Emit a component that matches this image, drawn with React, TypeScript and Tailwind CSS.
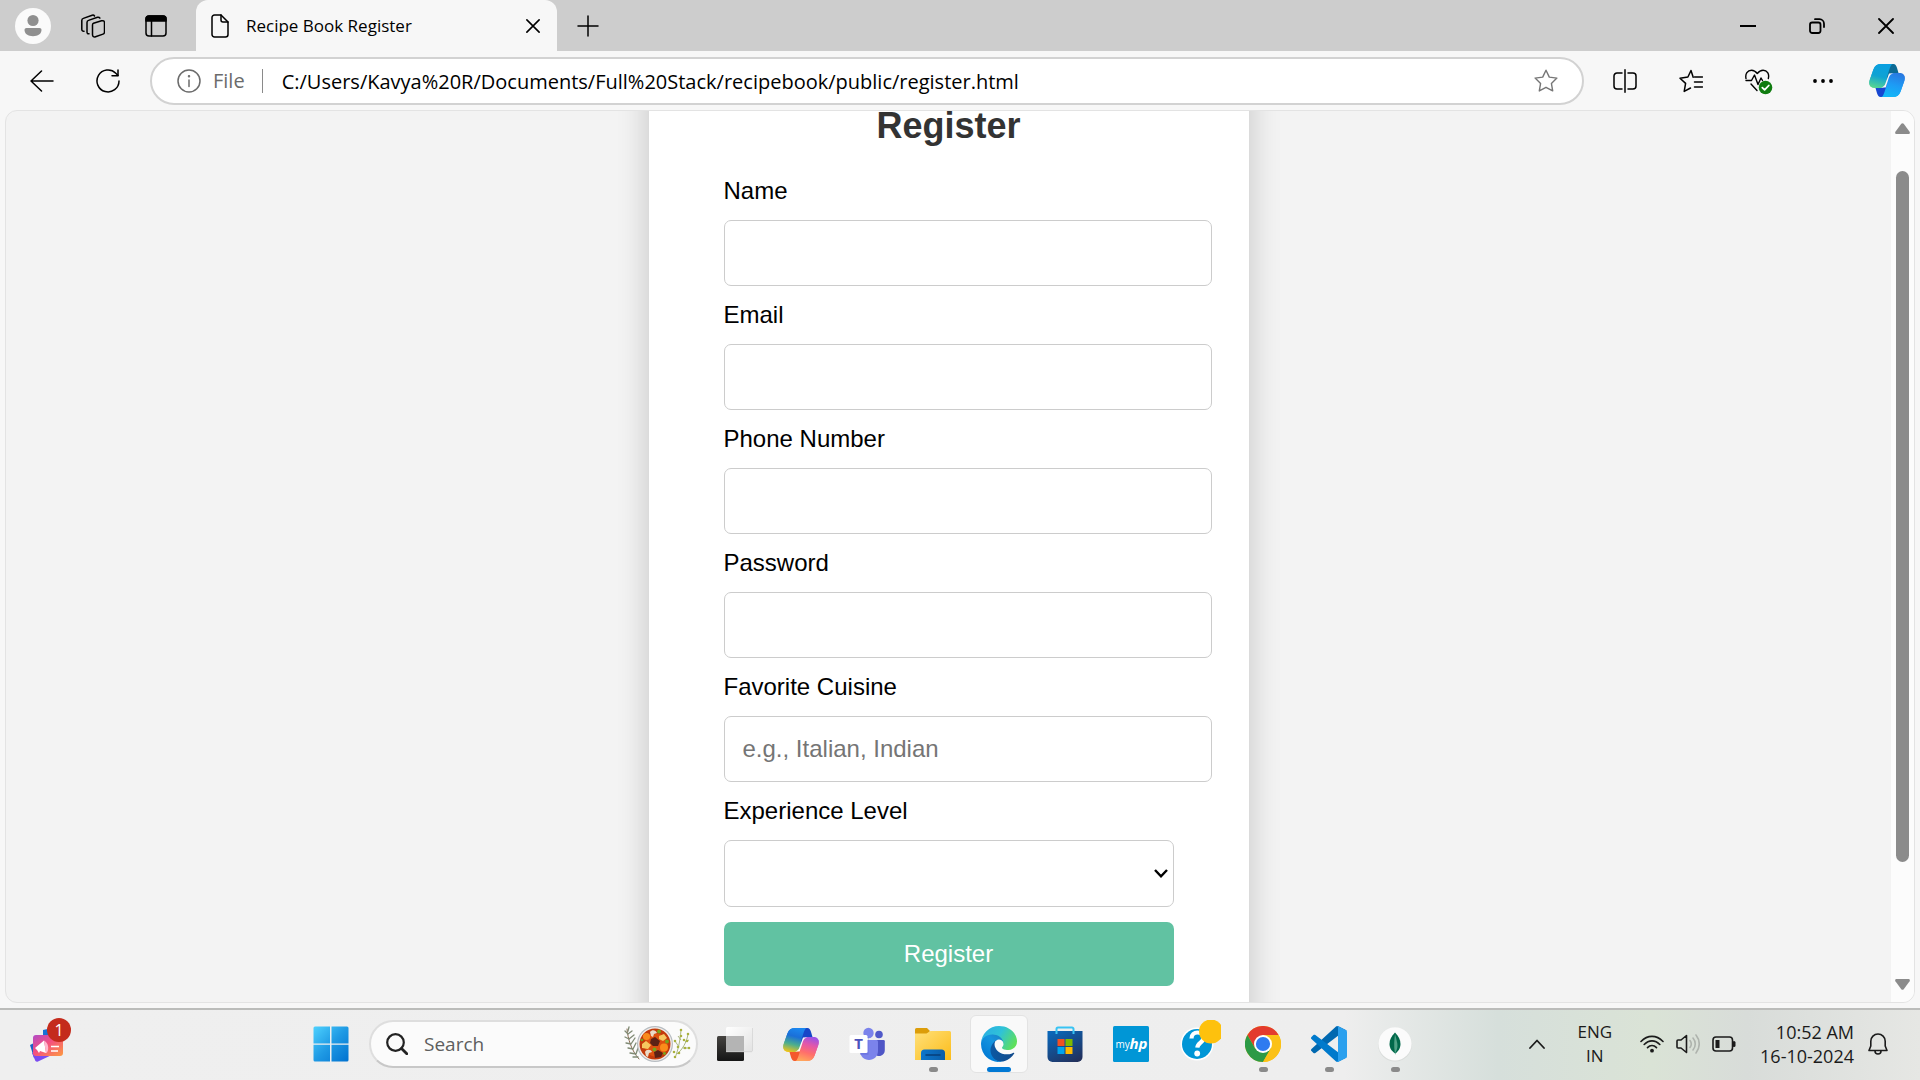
import type { ReactNode } from 'react';

const UI = "font-['Open_Sans','Noto_Sans',sans-serif]";
const ARIAL = "font-['Liberation_Sans',Arial,sans-serif]";

/* ---------- browser chrome icons ---------- */

const line = { fill: 'none', stroke: 'currentColor', strokeLinecap: 'round', strokeLinejoin: 'round' } as const;

const Avatar = () => (
  <svg className="size-9" viewBox="0 0 36 36">
    <circle cx="18" cy="18" r="18" fill="#fafafa" />
    <circle cx="18" cy="12.500" r="5.600" fill="#8f8f8f" />
    <path d="M11.500 20h13c1.200 0 2 .8 2 2 0 3.800-3.600 6.200-8.500 6.200S9.500 25.800 9.500 22c0-1.200.8-2 2-2Z" fill="#8f8f8f" />
  </svg>
);

const Workspaces = () => (
  <svg className="size-6" viewBox="0 0 24 24" {...line} strokeWidth="1.500">
    <path d="M12.500 9.200 20.500 6.800c1.700-.5 3 .3 3 2V18c0 1-.6 1.800-1.500 2.100l-7.500 2.700c-1.600.6-3-.3-3-2V11c0-.9.4-1.500 1-1.800Z" />
    <path d="M8 19.800C6.600 20 6 19.200 6 18V8.500c0-1 .5-1.800 1.500-2.100L16.500 3.300c1-.3 1.900 0 2.400.9" />
    <path d="M3 17.200C1.500 17.400.8 16.500.8 15.300V6.500c0-1 .5-1.800 1.500-2.100L11.200 1.200c1-.3 1.800 0 2.300.8" />
  </svg>
);

const VerticalTabs = () => (
  <svg className="h-[22px] w-[22px]" viewBox="0 0 22 22" {...line} strokeWidth="1.500">
    <rect x="1" y="1" width="20" height="20" rx="3" />
    <path d="M1 6V4a3 3 0 0 1 3-3h14a3 3 0 0 1 3 3v2Z" fill="currentColor" />
    <path d="M6.500 6v15" />
  </svg>
);

const PageIcon = () => (
  <svg className="h-6 w-[18px]" viewBox="0 0 18 24" {...line} strokeWidth="1.500">
    <path d="M3.500 1H10l7 7v12.500a2.500 2.500 0 0 1-2.500 2.500h-11A2.500 2.500 0 0 1 1 20.500v-17A2.500 2.500 0 0 1 3.500 1Z" />
    <path d="M10 1v5a2 2 0 0 0 2 2h5" />
  </svg>
);

const Cross = ({ className }: { className: string }) => (
  <svg className={className} viewBox="0 0 16 16" {...line} strokeWidth="1.800">
    <path d="m1 1 14 14M15 1 1 15" />
  </svg>
);

const Plus = () => (
  <svg className="size-[22px]" viewBox="0 0 22 22" {...line} strokeWidth="1.500">
    <path d="M11 1v20M1 11h20" />
  </svg>
);

const Restore = () => (
  <svg className="size-4" viewBox="0 0 16 16" {...line} strokeWidth="1.800">
    <rect x="1" y="4.500" width="10.500" height="10.500" rx="2.200" />
    <path d="M6 1.200h4.500A4.500 4.500 0 0 1 15 5.700V9" />
  </svg>
);

const Back = () => (
  <svg className="size-6" viewBox="0 0 24 24" {...line} strokeWidth="1.500">
    <path d="M23 12H1M11.500 2 1 12l10.500 10" />
  </svg>
);

const Reload = () => (
  <svg className="size-6" viewBox="0 0 24 24" {...line} strokeWidth="1.500">
    <path d="M23 12A11 11 0 1 1 19.800 4.200L22 6.500" />
    <path d="M22 1v5.800h-6" />
  </svg>
);

const Info = () => (
  <svg className="size-6 text-[#6b6b6b]" viewBox="0 0 24 24" {...line} strokeWidth="1.500">
    <circle cx="12" cy="12" r="11" />
    <path d="M12 11v6.500" />
    <circle cx="12" cy="7.300" r=".5" fill="currentColor" />
  </svg>
);

const StarIcon = () => (
  <svg className="size-6 text-[#767676]" viewBox="0 0 24 24" {...line} strokeWidth="1.400">
    <path d="m12 1.200 3.300 6.900 7.600 1-5.500 5.300 1.300 7.500L12 18.300l-6.700 3.600 1.300-7.500L1.100 9.100l7.600-1Z" />
  </svg>
);

const SplitScreen = () => (
  <svg className="size-6" viewBox="0 0 24 24" {...line} strokeWidth="1.500">
    <path d="M12 .8v22.400M9 4H4a3 3 0 0 0-3 3v10a3 3 0 0 0 3 3h5M15 4h5a3 3 0 0 1 3 3v10a3 3 0 0 1-3 3h-5" />
  </svg>
);

const Favorites = () => (
  <svg className="size-6" viewBox="0 0 24 24" {...line} strokeWidth="1.500">
    <path d="M14.200 8.200 12 1.500 8.900 8 1 9.200l5.600 5.200-1.400 8L11.500 19" />
    <path d="M15.500 8h8M15.500 13h8M15.500 18h8" />
  </svg>
);

const Essentials = () => (
  <svg className="h-7 w-7" viewBox="0 0 28 28" {...line} strokeWidth="1.400">
    <path d="M1 11.500C0 7 2.500 3.200 6.500 3.200c2.500 0 4.200 1.200 5.800 3.300 1.600-2.100 3.300-3.300 5.800-3.300 4 0 6.500 3.800 5.200 8.300" />
    <path d="M1 13.500h5.500L9.500 8l3.500 9.500 3-6.500 1.500 2.500M6 17l6 6.500" />
    <circle cx="20.500" cy="20.500" r="6.800" fill="#107c10" stroke="none" />
    <path d="m17.300 20.700 2.300 2.200 4.200-4.400" stroke="#fff" strokeWidth="1.800" />
  </svg>
);

const Dots = () => (
  <svg className="size-6" viewBox="0 0 24 24" fill="currentColor">
    <circle cx="4" cy="12" r="1.900" /><circle cx="12" cy="12" r="1.900" /><circle cx="20" cy="12" r="1.900" />
  </svg>
);

const LOBE_L = 'M12 0H27C24 0 22.500 2 21.500 5L17 19.500C16 22.700 14.500 24 11.500 24H6C1 24-.6 20.500.7 16L4.400 5.500C5.800 1.700 8.300 0 12 0Z';
const LOBE_R = 'M24 33H9C12 33 13.500 31 14.500 28L19 13.500C20 10.300 21.500 9 24.500 9H30C35 9 36.600 12.500 35.300 17L31.600 27.500C30.200 31.300 27.700 33 24 33Z';
const FOLD_T = 'M19 0h5c2.500 0 3.500 1.800 4.200 4.500L29.500 9h-5c-3 0-4.500 1.300-5.500 4.500L18 16.500 17.500 9Z';
const FOLD_B = 'M17 33h-5c-2.500 0-3.500-1.800-4.200-4.500L6.500 24h5c3 0 4.500-1.300 5.500-4.500l1-3 .5 7.500Z';

const Copilot = ({ id, left, right, top, bottom }: { id: string; left: string[]; right: string[]; top: string; bottom: string }) => (
  <svg className="h-[33px] w-9" viewBox="0 0 36 33">
    <defs>
      <linearGradient id={`${id}l`} x1=".5" y1="0" x2=".25" y2="1">
        {left.map((c, i) => <stop key={c} offset={i / (left.length - 1)} stopColor={c} />)}
      </linearGradient>
      <linearGradient id={`${id}r`} x1=".7" y1="0" x2=".4" y2="1">
        {right.map((c, i) => <stop key={c} offset={i / (right.length - 1)} stopColor={c} />)}
      </linearGradient>
    </defs>
    <path d={LOBE_L} fill={`url(#${id}l)`} />
    <path d={LOBE_R} fill={`url(#${id}r)`} />
    <path d={FOLD_B} fill={bottom} />
    <path d={FOLD_T} fill={top} />
    <path d="M12 0H24C22.500 0 21.500 2 20.500 5L16 19.500C15 22.700 13.500 24 10.500 24H6C1 24-.6 20.500.7 16L4.400 5.500C5.800 1.700 8.300 0 12 0Z" fill={`url(#${id}l)`} />
    <path d="M24 33H12C13.500 33 14.500 31 15.500 28L20 13.500C21 10.300 22.500 9 25.500 9H30C35 9 36.600 12.500 35.300 17L31.600 27.500C30.200 31.300 27.700 33 24 33Z" fill={`url(#${id}r)`} />
    <path d="M20 9.500h4.500c-2.600.3-3.900 1.800-4.800 4.500l-3 9.500H12c2.500-.5 3.700-1.700 4.500-4.200Z" fill="#f8f8f8" />
  </svg>
);

/* ---------- taskbar icons ---------- */

const Widgets = () => (
  <svg className="h-10 w-10" viewBox="0 0 40 40">
    <defs>
      <linearGradient id="wg" x1="0" y1="0" x2="1" y2="1">
        <stop offset="0" stopColor="#b04ac9" /><stop offset=".45" stopColor="#f4507f" /><stop offset="1" stopColor="#fd9a40" />
      </linearGradient>
    </defs>
    <path d="m14 6 9-2v10H14Z" fill="#1571d8" />
    <path d="m1 21 4-2 3 14-3 1Z" fill="#1c62c4" />
    <path d="M3 29h24L9 37.500c-1.500.6-2.600 0-3-1.500Z" fill="#7a4cf0" />
    <rect x="4" y="11" width="30" height="21" rx="3" fill="url(#wg)" />
    <path d="m6 24 9-7.500L17 29l-6-2-1 2-2-3Z" fill="#fff" />
    <path d="M15 16.500c4 2 5.500 8 3 12l-1 .5Z" fill="#ffb8cf" />
    <path d="M22 22.500h8M22 27h7" stroke="#fff" strokeWidth="1.600" />
  </svg>
);

const Start = () => (
  <svg className="size-9" viewBox="0 0 36 36">
    <defs>
      <linearGradient id="win" gradientUnits="userSpaceOnUse" x1="0" y1="0" x2="36" y2="36">
        <stop offset="0" stopColor="#4fd3ff" /><stop offset=".5" stopColor="#1f9ae4" /><stop offset="1" stopColor="#0070cf" />
      </linearGradient>
    </defs>
    <path fill="url(#win)" d="M2 .5h15v17H.500V2A1.500 1.500 0 0 1 2 .5ZM18.500.5H34A1.500 1.500 0 0 1 35.500 2v15.500h-17ZM.5 18.800h16.500v16.700H2A1.500 1.500 0 0 1 .5 34ZM18.500 18.800h17V34a1.500 1.500 0 0 1-1.500 1.500H18.500Z" />
  </svg>
);

const SearchGlyph = () => (
  <svg className="size-[22px] text-[#222]" viewBox="0 0 22 22" {...line} strokeWidth="2.200">
    <circle cx="9.500" cy="9.500" r="8.300" />
    <path d="m15.500 15.500 5.300 5.300" strokeWidth="2.800" />
  </svg>
);

const Stew = () => (
  <svg className="h-10 w-[68px]" viewBox="0 0 68 40">
    <g stroke="#7f8a74" strokeWidth="1.300" fill="none" strokeLinecap="round">
      <path d="M3 5c1 10 4 21 12 30" stroke="#8a6b52" strokeWidth="1" />
      <path d="m4 10-3-3M4 10l4-3M5 15l-4-2M5 15l5-4M7 20l-5-1M7 20l4-6M9 25l-5-1M9 25l3-6M12 30l-6-1M12 30l2-6M4 7l1-4M14 33l-5 0" strokeWidth="1.300" />
    </g>
    <g stroke="#96a566" strokeWidth="1" fill="none">
      <path d="M51 34c3-8 5-16 6-28M53 30c5-4 10-12 11-20M55 23l-4-6M57 16l-3-4M59 24l5 0M61 18l4-2" strokeWidth=".8" />
      <path d="M57 6v0M51 17v0M57 12v0M64 10v0M60 16v0M54 23v0M65 24v0M61 24v0M50 28v0M55 29v0M51 33v0M63 17v0" stroke="#a9b13e" strokeWidth="2.600" strokeLinecap="round" />
    </g>
    <circle cx="31" cy="20" r="18" fill="#b7bcc1" />
    <circle cx="31" cy="20" r="16.800" fill="#f2efec" />
    <circle cx="31" cy="20" r="15.500" fill="#c33b0c" />
    <circle cx="32" cy="21" r="11.500" fill="#dd500f" />
    <circle cx="22.500" cy="12.500" r="3.600" fill="#f98b1c" />
    <circle cx="40" cy="23.500" r="4" fill="#fb8c1a" />
    <path d="m18 20 4-3 5 4-3 4-6-1ZM35 12l5-2 3 4-4 3-4-2Z" fill="#f6c860" />
    <path d="m27 15 4-2 5 4-2 5-5 0-3-3ZM30 28l4-2 5 3-2 4-6 1Z" fill="#5c2116" />
    <path d="M26 8c2-3 6-2 7 1l-3 1-1 3-2-1ZM21 28c1-3 6-3 7 0l-3 1-1 4-2-1Z" fill="#eadbc8" />
    <circle cx="35" cy="7.500" r="1.900" fill="#76a51d" /><circle cx="43" cy="17.500" r="1.900" fill="#76a51d" />
    <circle cx="30.500" cy="25.500" r="1.900" fill="#76a51d" /><circle cx="18" cy="16" r="1.300" fill="#76a51d" />
    <circle cx="40.500" cy="29.500" r="1.400" fill="#76a51d" />
  </svg>
);

const TaskView = () => (
  <svg className="size-9" viewBox="0 0 36 36">
    <defs>
      <linearGradient id="tv" x1="0" y1="0" x2="0" y2="1"><stop offset="0" stopColor="#454340" /><stop offset="1" stopColor="#151515" /></linearGradient>
      <linearGradient id="tw" x1="0" y1="0" x2="1" y2="1"><stop offset="0" stopColor="#fff" /><stop offset="1" stopColor="#e2e2e2" /></linearGradient>
    </defs>
    <rect x="0" y="10" width="27" height="25" rx="1.500" fill="url(#tv)" />
    <rect x="9" y="1" width="27" height="25" rx="1.500" fill="url(#tw)" />
    <path d="M9 10h18v16H10.500A1.500 1.500 0 0 1 9 24.500Z" fill="#b4b4b4" />
    <path d="M9 25.700h26M35.700 2v23" stroke="#cfcfcf" strokeWidth=".8" />
  </svg>
);

const Teams = () => (
  <svg className="size-9" viewBox="0 0 36 36">
    <circle cx="30" cy="8.500" r="3.800" fill="#5059c9" />
    <path d="M26 14h8.500a1.300 1.300 0 0 1 1.300 1.300V24c0 3.500-2.500 6-5.800 6-1.600 0-3-.6-4-1.500Z" fill="#4f56c6" />
    <circle cx="19.500" cy="7" r="5.200" fill="#7b83eb" />
    <path d="M11 14h16.500a1.500 1.500 0 0 1 1.500 1.500V25c0 5-4 9-9 9s-9-4-9-9Z" fill="#7b83eb" />
    <rect x=".5" y="9" width="18" height="18" rx="1.500" fill="#fff" />
    <path d="M19 10.500v16.500h-8v1.800h8.500V12Z" fill="#5a62cf" opacity=".4" />
    <text x="9.500" y="23.300" textAnchor="middle" fontSize="15" fontWeight="700" fill="#4b53bc" fontFamily="Open Sans, sans-serif">T</text>
  </svg>
);

const Explorer = () => (
  <svg className="size-9" viewBox="0 0 36 36">
    <defs>
      <linearGradient id="fo" x1="0" y1="0" x2="1" y2="1"><stop offset="0" stopColor="#ffe07a" /><stop offset="1" stopColor="#fcbc19" /></linearGradient>
      <linearGradient id="fb" x1="0" y1="0" x2="1" y2="0"><stop offset="0" stopColor="#0d76cc" /><stop offset="1" stopColor="#0a5da8" /></linearGradient>
    </defs>
    <path d="M0 3.500A1.500 1.500 0 0 1 1.500 2H12l3 3-3 4H0Z" fill="#dc9d0a" />
    <path d="M0 7.500h11.500l4-2.500H34.500A1.500 1.500 0 0 1 36 6.500V34H0Z" fill="url(#fo)" />
    <path d="M6 34v-7a3.500 3.500 0 0 1 3.500-3.500h17A3.500 3.500 0 0 1 30 27v7Z" fill="url(#fb)" />
    <path d="M11 29h14" stroke="#073e78" strokeWidth="1.500" strokeLinecap="round" />
  </svg>
);

const Edge = () => (
  <svg className="size-9" viewBox="0 0 256 256">
    <defs>
      <linearGradient id="ea" x1="0" y1=".5" x2="1" y2=".5"><stop offset="0" stopColor="#0c59a4" /><stop offset="1" stopColor="#114a8b" /></linearGradient>
      <linearGradient id="eb" x1=".9" y1=".2" x2=".3" y2="1"><stop offset="0" stopColor="#1b86c9" /><stop offset=".3" stopColor="#1595df" /><stop offset="1" stopColor="#0078d4" /></linearGradient>
      <linearGradient id="ec" x1="0" y1=".2" x2="1" y2=".6"><stop offset="0" stopColor="#2aaee4" /><stop offset=".5" stopColor="#2fc2d8" /><stop offset="1" stopColor="#5fe05a" /></linearGradient>
    </defs>
    <path fill="url(#ea)" d="M231.070 190.540c-3.430 1.800-6.960 3.380-10.570 4.730a101.880 101.880 0 0 1-35.900 6.460c-47.320 0-88.540-32.550-88.540-74.320a31.480 31.480 0 0 1 16.400-27.280c-42.800 1.800-53.800 46.400-53.800 72.530 0 73.880 68.090 81.370 82.760 81.370 7.910 0 19.840-2.300 27-4.560l1.310-.44a128.340 128.340 0 0 0 66.600-52.800 4 4 0 0 0-5.260-5.690Z" />
    <path fill="url(#eb)" d="M105.730 241.420A79.200 79.200 0 0 1 83 220.080a80.720 80.720 0 0 1 29.500-120c3.120-1.470 8.450-4.130 15.540-4a32.350 32.350 0 0 1 25.690 13 31.880 31.880 0 0 1 6.360 18.660c0-.21 24.460-79.600-80-79.600-43.900 0-80 41.660-80 78.210a130.150 130.150 0 0 0 12.110 56 128 128 0 0 0 156.380 67.110 75.550 75.550 0 0 1-62.780-8Z" />
    <path fill="url(#ec)" d="M152.330 148.860c-.81 1.050-3.300 2.500-3.300 5.660 0 2.610 1.700 5.120 4.720 7.230 14.380 10 41.490 8.680 41.560 8.680a59.560 59.560 0 0 0 30.270-8.350 61.380 61.380 0 0 0 30.430-52.880c.26-22.410-8-37.310-11.340-43.910C223.450 23.840 177.720 0 128 0A128 128 0 0 0 0 126.200c.48-36.540 36.800-66.050 80-66.050 3.500 0 23.460.34 42 10.070 16.340 8.580 24.900 18.940 30.850 29.210 6.180 10.670 7.280 24.150 7.280 29.520s-2.740 13.330-7.800 19.910Z" />
  </svg>
);

const Store = () => (
  <svg className="size-9" viewBox="0 0 36 36">
    <defs>
      <linearGradient id="st" x1=".2" y1="0" x2=".8" y2="1"><stop offset="0" stopColor="#0a66b8" /><stop offset="1" stopColor="#22305c" /></linearGradient>
    </defs>
    <path d="M.5 5h35v26a5 5 0 0 1-5 5h-25a5 5 0 0 1-5-5Z" fill="url(#st)" />
    <path d="M9.500 8V3A1.500 1.500 0 0 1 11 1.500h14A1.500 1.500 0 0 1 26.500 3v5" fill="none" stroke="#38c3f3" strokeWidth="2" />
    <path d="M10.500 13h7v7h-7Z" fill="#f25022" /><path d="M18.500 13h7v7h-7Z" fill="#7fba00" />
    <path d="M10.500 21h7v7h-7Z" fill="#00a4ef" /><path d="M18.500 21h7v7h-7Z" fill="#ffb900" />
  </svg>
);

const MyHp = () => (
  <svg className="size-9" viewBox="0 0 36 36">
    <rect width="36" height="36" rx="1.500" fill="#0096d6" />
    <text x="2.500" y="22" fontSize="10" fill="#fff" fontFamily="Open Sans, sans-serif">my</text>
    <text x="16.500" y="22.500" fontSize="15" fontWeight="700" fontStyle="italic" fill="#fff" fontFamily="Open Sans, sans-serif">hp</text>
  </svg>
);

const Help = () => (
  <svg className="h-11 w-11" viewBox="0 0 44 44">
    <circle cx="20" cy="24" r="16.500" fill="#fff" />
    <circle cx="20" cy="24" r="15" fill="#0096d6" />
    <path d="M14.500 18.500c0-4 2.800-6 6-6s6 2 6 5.200c0 4.800-6 4.800-6.200 10" fill="none" stroke="#fff" strokeWidth="4.200" />
    <circle cx="20.200" cy="33.500" r="2.900" fill="#fff" />
    <circle cx="34" cy="11.500" r="12" fill="#fec10d" />
  </svg>
);

const Chrome = () => (
  <svg className="size-9" viewBox="0 0 36 36">
    <circle cx="18" cy="18" r="18" fill="#fbc116" />
    <path d="M18 9h15.600A18 18 0 0 0 2.400 9l7.800 13.500Z" fill="#e33b2e" />
    <path d="M10.200 22.500 2.400 9A18 18 0 0 0 18 36l7.800-13.500Z" fill="#2c9a46" />
    <path d="M25.800 22.500 18 36A18 18 0 0 0 33.600 9H18Z" fill="#fbc116" />
    <circle cx="18" cy="18" r="9" fill="#fff" />
    <circle cx="18" cy="18" r="7.100" fill="#2f7bf0" />
  </svg>
);

const VsCode = () => (
  <svg className="size-9" viewBox="0 0 100 100">
    <path fill="#0068b0" d="M96.461 10.796 75.857.876C73.472-.273 70.622.212 68.750 2.083L1.299 63.583c-1.815 1.654-1.813 4.511.004 6.162l5.510 5.009c1.485 1.350 3.722 1.450 5.321.237L93.361 13.370C96.086 11.303 100 13.246 100 16.667v-.240c0-2.400-1.375-4.589-3.539-5.631Z" />
    <path fill="#007acc" d="m96.461 89.204-20.604 9.920c-2.385 1.149-5.235.665-7.107-1.207L1.299 36.417c-1.815-1.654-1.813-4.511.004-6.162l5.510-5.009c1.485-1.350 3.722-1.450 5.321-.237L93.361 86.630C96.086 88.697 100 86.754 100 83.333v.240c0 2.400-1.375 4.589-3.539 5.631Z" />
    <path fill="#2ba0ee" d="M75.858 99.126c-2.386 1.148-5.236.662-7.108-1.209C71.056 100.223 75 98.590 75 95.328V4.672C75 1.410 71.056-.223 68.750 2.083 70.622.211 73.472-.274 75.858.874l20.601 9.907C98.623 11.822 100 14.011 100 16.413v67.174c0 2.402-1.377 4.592-3.541 5.633Z" />
  </svg>
);

const Mongo = () => (
  <svg className="size-9" viewBox="0 0 36 36">
    <circle cx="18" cy="18.500" r="17" fill="#d9dcda" />
    <circle cx="18" cy="17.800" r="16.600" fill="#fbfbfb" />
    <path d="M18 6.500c3.500 4 5.500 7 5.500 11.500S21 25.500 18.400 27.500c-3.400-2-5.900-5-5.900-9.500S14.500 10.500 18 6.500Z" fill="#00684a" />
    <path d="M18 8c-.8 6-1.200 12-.2 18.500l.3 2.500.4-2.500c1.800-3 2.300-6 1.800-9S18.800 11 18 8Z" fill="#4fa286" />
  </svg>
);

const Chevron = () => (
  <svg className="h-[10px] w-4" viewBox="0 0 16 10" {...line} strokeWidth="1.800"><path d="m1 9 7-7.500L15 9" /></svg>
);

const Wifi = () => (
  <svg className="h-[18px] w-6" viewBox="0 0 24 18" {...line} strokeWidth="1.600">
    <path d="M1 6.500c6.500-6.800 15.500-6.800 22 0M4.200 9.500c4.600-4.900 11-4.900 15.600 0M7.500 12.600c2.700-2.900 6.300-2.900 9 0" />
    <circle cx="12" cy="15.700" r="1.900" fill="currentColor" stroke="none" />
  </svg>
);

const Volume = () => (
  <svg className="h-5 w-6" viewBox="0 0 24 20" {...line} strokeWidth="1.600">
    <path d="M1 7v6a1 1 0 0 0 1 1h3l5.500 4.500V1.500L5 6H2a1 1 0 0 0-1 1Z" />
    <path d="M14 6.500c1.500 2 1.500 5 0 7M17 4c3 3.500 3 8.500 0 12M20 1c4.300 5.500 4.300 12.500 0 18" stroke="#aeb3ad" />
  </svg>
);

const Battery = () => (
  <svg className="h-4 w-6" viewBox="0 0 24 16" {...line} strokeWidth="1.600">
    <rect x="1" y="1" width="19.500" height="14" rx="3" />
    <rect x="3.500" y="4" width="4" height="8" fill="currentColor" stroke="none" />
    <path d="M22 6.500v3" strokeWidth="3" />
  </svg>
);

const Bell = () => (
  <svg className="h-[22px] w-5" viewBox="0 0 20 22" {...line} strokeWidth="1.600">
    <path d="M10 1a7.200 7.200 0 0 0-7.200 7.200v4.800L1 17.500h18L17.200 13V8.200A7.200 7.200 0 0 0 10 1ZM7 18a3 3 0 0 0 6 0" />
  </svg>
);

/* ---------- building blocks ---------- */

function IconButton({ label, className, children }: { label: string; className?: string; children: ReactNode }) {
  return (
    <button type="button" aria-label={label} className={`flex shrink-0 items-center justify-center ${className ?? ''}`}>
      {children}
    </button>
  );
}

function TaskButton({ label, state, children }: { label: string; state?: 'running' | 'active'; children: ReactNode }) {
  return (
    <button type="button" aria-label={label} className="flex h-full w-[66px] shrink-0 items-center justify-center">
      <span
        className={`relative flex size-[58px] items-center justify-center rounded-md border ${
          state === 'active' ? 'border-[#e3e3e3] bg-[#f9f9f9]' : 'border-transparent'
        }`}
      >
        {children}
        {state === 'active' && <span className="absolute bottom-0 h-[5px] w-6 rounded-full bg-[#0078d4]" />}
        {state === 'running' && <span className="absolute bottom-0 h-[5px] w-[9px] rounded-full bg-[#8a8a8a]" />}
      </span>
    </button>
  );
}

const fields = [
  { id: 'name', label: 'Name', type: 'text' },
  { id: 'email', label: 'Email', type: 'email' },
  { id: 'phone', label: 'Phone Number', type: 'tel' },
  { id: 'password', label: 'Password', type: 'password' },
  { id: 'cuisine', label: 'Favorite Cuisine', type: 'text', placeholder: 'e.g., Italian, Indian' },
];

function TabStrip() {
  return (
    <header className="flex h-[51px] shrink-0 items-center bg-[#cdcdcd]">
      <IconButton label="Profile" className="ml-[15px]"><Avatar /></IconButton>
      <IconButton label="Workspaces" className="ml-[30px]"><Workspaces /></IconButton>
      <IconButton label="Tab actions" className="ml-10"><VerticalTabs /></IconButton>
      <div className="ml-[29px] flex h-full w-[361px] items-center rounded-t-xl bg-[#f7f7f7] pr-[17px] pl-[15px]">
        <PageIcon />
        <span className="ml-[17px] grow text-[17px] whitespace-nowrap">Recipe Book Register</span>
        <IconButton label="Close tab"><Cross className="size-[14px]" /></IconButton>
      </div>
      <IconButton label="New tab" className="ml-5"><Plus /></IconButton>
      <div className="ml-auto flex items-center gap-[53px] pr-[26px]">
        <IconButton label="Minimize" className="h-4 w-4"><span className="h-0.5 w-4 bg-black" /></IconButton>
        <IconButton label="Restore"><Restore /></IconButton>
        <IconButton label="Close"><Cross className="size-4" /></IconButton>
      </div>
    </header>
  );
}

function Toolbar() {
  return (
    <div className="flex h-[59px] shrink-0 items-center bg-[#f7f7f7] pl-[30px]">
      <IconButton label="Back"><Back /></IconButton>
      <IconButton label="Refresh" className="ml-[42px]"><Reload /></IconButton>
      <div className="ml-[30px] flex h-12 grow items-center rounded-full border-2 border-[#d2d2d2] bg-white pr-6 pl-[25px]">
        <Info />
        <span className="ml-3 pt-px text-[20px] text-[#6b6b6b]">File</span>
        <span className="ml-[17px] h-6 w-px bg-[#8a8a8a]" />
        <input
          aria-label="Address"
          readOnly
          value="C:/Users/Kavya%20R/Documents/Full%20Stack/recipebook/public/register.html"
          className="ml-[19px] h-8 grow bg-transparent pt-px text-[20px] text-black outline-none"
        />
        <IconButton label="Add to favorites"><StarIcon /></IconButton>
      </div>
      <div className="ml-[29px] flex items-center gap-[42px] pr-[15px]">
        <IconButton label="Split screen"><SplitScreen /></IconButton>
        <IconButton label="Favorites"><Favorites /></IconButton>
        <IconButton label="Browser essentials" className="-mr-1"><Essentials /></IconButton>
        <IconButton label="Settings and more"><Dots /></IconButton>
        <IconButton label="Copilot" className="-ml-2">
          <Copilot id="ct" left={['#0a9fe0', '#0fa3d3', '#58d68f']} right={['#2a78e0', '#1d9bf5', '#13b7f7']} top="#0c6a94" bottom="#1747d1" />
        </IconButton>
      </div>
    </div>
  );
}

function RegisterPage() {
  const control = 'rounded-[7px] border border-[#ccc] bg-white px-[18px]';
  return (
    <div className={`min-w-0 grow text-[24px] leading-7 text-black ${ARIAL}`}>
      <main className="mx-auto -mt-[51px] min-h-full w-[600px] max-w-full bg-white px-[75px] pt-[45px] pb-[75px] shadow-[0_0_30px_rgba(0,0,0,0.2)]">
        <h2 className="mb-[30px] text-center text-[36px] leading-[42px] font-bold text-[#333]">Register</h2>
        <form className="flex flex-col gap-[15px]" onSubmit={(e) => e.preventDefault()}>
          {fields.map((f) => (
            <div key={f.id} className="-mr-[38px] flex flex-col gap-[15px]">
              <label htmlFor={f.id} className="self-start">{f.label}</label>
              <input id={f.id} type={f.type} placeholder={f.placeholder} className={`h-[66px] placeholder:text-[#757575] ${control}`} />
            </div>
          ))}
          <label htmlFor="level" className="self-start">Experience Level</label>
          <div className="relative flex">
            <select id="level" defaultValue="" className={`h-[67px] grow appearance-none ${control}`}>
              <option value=""></option>
              <option>Beginner</option>
              <option>Intermediate</option>
              <option>Expert</option>
            </select>
            <svg className="pointer-events-none absolute top-[29px] right-[6px] h-[9px] w-[14px]" viewBox="0 0 14 9" fill="none" stroke="#000" strokeWidth="2.400">
              <path d="m1 1 6 6.300L13 1" />
            </svg>
          </div>
          <button type="submit" className="h-16 rounded-[7px] bg-[#61c2a2] text-white">Register</button>
        </form>
      </main>
    </div>
  );
}

const ScrollArrow = ({ className }: { className?: string }) => (
  <svg className={`h-[11px] w-[15px] shrink-0 ${className ?? ''}`} viewBox="0 0 15 11" fill="#8b8b8b">
    <path d="M6.300.8.4 8.800C-.2 9.800.3 11 1.500 11h12c1.200 0 1.700-1.200 1.100-2.200L8.700.8C8.100 0 6.900 0 6.300.8Z" />
  </svg>
);

function ScrollBar() {
  return (
    <div className="flex w-[23px] shrink-0 flex-col items-center bg-[#fcfcfc] py-3">
      <ScrollArrow />
      <div className="flex w-full grow flex-col items-center pt-[37px] pb-[117px]">
        <div className="w-[13px] grow rounded-full bg-[#8b8b8b]" />
      </div>
      <ScrollArrow className="rotate-180" />
    </div>
  );
}

function Taskbar() {
  return (
    <footer className="flex h-[72px] shrink-0 items-stretch border-t-2 border-[#bbbcba] bg-[linear-gradient(90deg,#efefef_0%,#eeeeee_70%,#d6dfdb_78%,#dae3d6_86%,#d8dcd9_91%,#e6e7e4_100%)] pb-0.5 text-[#1b1b1b]">
      <button type="button" aria-label="Widgets, 1 notification" className="relative ml-[29px] flex w-12 items-center">
        <Widgets />
        <span className="absolute top-[8px] left-[18px] flex size-6 items-center justify-center rounded-full bg-[#c42b1c] text-[16px] text-white">1</span>
      </button>
      <nav className="ml-[221px] flex items-center">
        <TaskButton label="Start"><Start /></TaskButton>
        <div className="mr-1 ml-[5px] flex h-12 w-[329px] items-center rounded-full border-2 border-[#dedede] border-b-[#c8c8c8] bg-[#fbfbfb] pr-1 pl-[15px]">
          <SearchGlyph />
          <input aria-label="Search" placeholder="Search" className="ml-4 w-0 grow bg-transparent text-[19px] outline-none placeholder:text-[#5e5e5e]" />
          <Stew />
        </div>
        <TaskButton label="Task view"><TaskView /></TaskButton>
        <TaskButton label="Copilot">
          <Copilot id="cb" left={['#1b86ee', '#1a6fd8', '#4cae8e', '#f0c419']} right={['#9a52e8', '#e457a8', '#ff6f6b', '#ffa55c']} top="#1646c8" bottom="#f4582c" />
        </TaskButton>
        <TaskButton label="Microsoft Teams"><Teams /></TaskButton>
        <TaskButton label="File Explorer" state="running"><Explorer /></TaskButton>
        <TaskButton label="Microsoft Edge" state="active"><Edge /></TaskButton>
        <TaskButton label="Microsoft Store"><Store /></TaskButton>
        <TaskButton label="myHP"><MyHp /></TaskButton>
        <TaskButton label="HP Support Assistant"><span className="-mt-1 ml-1"><Help /></span></TaskButton>
        <TaskButton label="Google Chrome" state="running"><Chrome /></TaskButton>
        <TaskButton label="Visual Studio Code" state="running"><VsCode /></TaskButton>
        <TaskButton label="MongoDB Compass" state="running"><Mongo /></TaskButton>
      </nav>
      <div className="ml-auto flex items-center pr-8 text-[17px] leading-6">
        <IconButton label="Show hidden icons" className="mr-8"><Chevron /></IconButton>
        <button type="button" className="mr-7 text-center">ENG<br />IN</button>
        <div className="mr-6 flex items-center gap-3">
          <Wifi />
          <Volume />
          <Battery />
        </div>
        <button type="button" className="mr-[14px] text-right text-[18px]">10:52 AM<br />16-10-2024</button>
        <IconButton label="Notifications"><Bell /></IconButton>
      </div>
    </footer>
  );
}

export default function App() {
  return (
    <div className={`flex h-screen flex-col overflow-hidden bg-[#f7f7f7] text-black ${UI}`}>
      <TabStrip />
      <Toolbar />
      <div className="mx-[5px] mb-[5px] flex min-h-0 grow overflow-hidden rounded-xl border border-[#e3e3e3] bg-[#f3f3f3]">
        <RegisterPage />
        <ScrollBar />
      </div>
      <Taskbar />
    </div>
  );
}
